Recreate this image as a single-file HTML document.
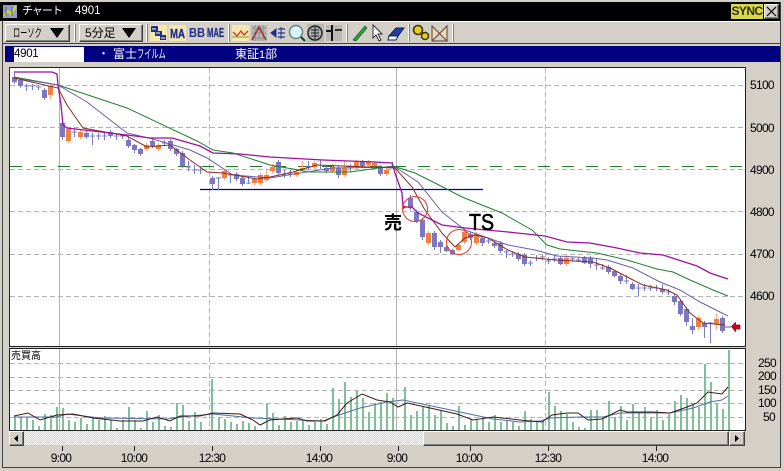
<!DOCTYPE html>
<html><head><meta charset="utf-8"><style>
html,body{margin:0;padding:0;width:784px;height:471px;overflow:hidden;background:#d4d0c8}
body{position:relative;font-family:"Liberation Sans","Noto Sans CJK JP",sans-serif;color:#000}
.a{position:absolute;white-space:nowrap}
.n{display:inline-block;transform:scaleX(.6);transform-origin:0 50%}
.btn{position:absolute;box-sizing:border-box;background:#d4d0c8;border:1px solid;border-color:#fff #404040 #404040 #fff;box-shadow:inset -1px -1px 0 #808080}
.tri{position:absolute;width:0;height:0;border-left:7px solid transparent;border-right:7px solid transparent;border-top:10px solid #000}
.sep{position:absolute;top:24px;height:18px;width:1px;background:#fff;border-right:1px solid #808080}
</style></head><body>
<div class="a" style="left:0;top:0;width:784px;height:2px;background:#d4d0c8"></div>
<div class="a" style="left:0;top:2px;width:781px;height:19px;background:#000"></div>
<div class="a" style="left:2px;top:21px;width:778px;height:1px;background:#fff"></div>
<div class="a" style="left:780px;top:2px;width:1px;height:466px;background:#404040"></div>
<div class="a" style="left:2px;top:21px;width:1px;height:447px;background:#404040"></div>
<div class="a" style="left:2px;top:467px;width:779px;height:1px;background:#404040"></div>
<svg class="a" style="left:3px;top:4px" width="15" height="15" viewBox="0 0 15 15"><rect x="0" y="1" width="14" height="13" fill="#9a9ac8"/><path d="M1 12L5 7L8 10L13 2" fill="none" stroke="#d0e020" stroke-width="2"/><path d="M3 3V12M9 3V12" stroke="#506090"/></svg>
<div class="a" style="left:22px;top:3px;font-size:11px;line-height:16px;color:#fff;letter-spacing:-1px">チャート</div>
<div class="a" style="left:75px;top:3px;font-size:11.5px;line-height:16px;color:#fff">4901</div>
<div class="a" style="left:731px;top:4px;width:32px;height:15px;background:#d8d850;font-size:12px;font-weight:bold;line-height:15px;text-align:center;color:#303000;letter-spacing:-.6px">SYNC</div>
<div class="btn" style="left:764px;top:4px;width:15px;height:15px"></div>
<svg class="a" style="left:764px;top:4px" width="15" height="15"><path d="M3 3L12 12M12 3L3 12" stroke="#000" stroke-width="1.2"/></svg>

<div class="btn" style="left:5px;top:24px;width:65px;height:18px"></div>
<div class="a" style="left:13px;top:25px;font-size:12px;line-height:16px"><span class="n">ローソク</span></div>
<div class="tri" style="left:50px;top:28px"></div>
<div class="sep" style="left:74px"></div>
<div class="btn" style="left:79px;top:24px;width:64px;height:18px"></div>
<div class="a" style="left:85px;top:25px;font-size:12px;line-height:16px">5分足</div>
<div class="tri" style="left:122px;top:28px"></div>
<div class="sep" style="left:146px"></div><div class="sep" style="left:228px"></div><div class="sep" style="left:346px"></div><div class="sep" style="left:408px"></div><div class="sep" style="left:452px"></div>

<svg class="a" style="left:148px;top:22px" width="310" height="22" viewBox="148 22 310 22">
<rect x="150" y="25" width="17" height="16" fill="#f4e8b0"/>
<rect x="151" y="26" width="7" height="6" fill="#20308a"/><rect x="155" y="31" width="7" height="5" fill="#20308a"/><rect x="160" y="35" width="6" height="5" fill="#20308a"/>
<path d="M152 29h4M156 33h4M161 38h4" stroke="#fff"/>
<rect x="169" y="25" width="17" height="16" fill="#f4e8b0"/>
<text x="170" y="38" font-size="13" font-weight="bold" fill="#20308a" stroke="#20308a" stroke-width=".4" textLength="15" lengthAdjust="spacingAndGlyphs" font-family="Liberation Sans">MA</text>
<text x="189" y="37" font-size="13" font-weight="bold" fill="#20308a" textLength="16" lengthAdjust="spacingAndGlyphs" font-family="Liberation Sans">BB</text>
<text x="207" y="37" font-size="13" font-weight="bold" fill="#20308a" stroke="#20308a" stroke-width=".3" textLength="17" lengthAdjust="spacingAndGlyphs" font-family="Liberation Sans">MAE</text>
<rect x="232" y="25" width="17" height="16" fill="#f4e8b0"/>
<path d="M233 32L237 36L241 31L244 35L248 31" fill="none" stroke="#d03020" stroke-width="1.3"/><path d="M232 37H249" stroke="#70a040"/>
<rect x="251" y="25" width="16" height="16" fill="#b8b8b4"/>
<path d="M252 28h14M252 33h14M252 38h14M255 25v16M259 25v16M263 25v16" stroke="#909090"/><path d="M252 40L259 27L266 40" fill="none" stroke="#a03030" stroke-width="1.5"/>
<path d="M271 33L276 29V37ZM281 27V39" fill="#20308a" stroke="#20308a"/><path d="M278 29h7M278 33h7M278 37h7" stroke="#20308a" stroke-width="1.3"/>
<circle cx="296" cy="32" r="6.5" fill="#d8f4f4" stroke="#608888" stroke-width="1.5"/><path d="M301 37L305 41" stroke="#104040" stroke-width="2.2"/>
<rect x="307" y="24" width="17" height="18" fill="#b8b8b4"/>
<circle cx="315" cy="33" r="7" fill="#b0b0b0" stroke="#202020" stroke-width="1.4"/><path d="M311 30h8M311 33h8M311 36h8M315 27v12" stroke="#202020"/>
<rect x="326" y="25" width="16" height="16" fill="#b8b8b4"/>
<path d="M332 25V41M326 31h6" stroke="#101010" stroke-width="2"/><path d="M335 30h7" stroke="#303030" stroke-width="2"/>
<path d="M353 40L365 26L367 28L356 41Z" fill="#30a040" stroke="#106020" stroke-width=".7"/>
<path d="M373 25V38L376 35L379 41L381 40L378 34H382Z" fill="#fff" stroke="#303030"/>
<path d="M389 36L396 28H404L398 36Z" fill="#2040a0" stroke="#102060"/><path d="M389 36H398L396 40H388Z" fill="#fff" stroke="#102060"/>
<circle cx="418" cy="30" r="4.5" fill="#e0d020" stroke="#403000" stroke-width="1.6"/><circle cx="425" cy="36" r="3.5" fill="#e0d020" stroke="#403000" stroke-width="1.5"/>
<path d="M432 26V41H447ZM432 41L447 26V41" fill="#e8dcb0" stroke="#604040" stroke-width="1"/>
</svg>

<div class="a" style="left:3px;top:43px;width:777px;height:1px;background:#404040"></div>
<div class="a" style="left:5px;top:46px;width:775px;height:16px;background:#000080"></div>
<div class="a" style="left:14px;top:47px;width:70px;height:15px;background:#fff;font-size:11.5px;line-height:15px;letter-spacing:-.3px">4901</div>
<div class="a" style="left:98px;top:46px;font-size:11px;line-height:16px;color:#fff">・</div>
<div class="a" style="left:113px;top:46px;font-size:12px;line-height:16px;color:#fff">富士<span class="n">フイルム</span></div>
<div class="a" style="left:235px;top:46px;font-size:12px;line-height:16px;color:#fff">東証<span style="font-size:11px">1</span>部</div>

<svg class="a" style="left:0;top:0" width="784" height="471" viewBox="0 0 784 471" font-family="Liberation Sans,Noto Sans CJK JP,sans-serif">
<rect x="9.5" y="67.5" width="736" height="279" fill="#fff" stroke="#202020"/>
<rect x="9.5" y="348.5" width="736" height="82" fill="#fff" stroke="#202020"/>
<path d="M10 85.5H745M10 127.5H745M10 169.5H745M10 211.5H745M10 254.5H745M10 296.5H745M10 363.5H745M10 377.5H745M10 390.5H745M10 403.5H745M10 417.5H745" stroke="#b4b4b4" stroke-dasharray="5 3"/>
<path d="M209.5 68V346M209.5 349V430M545.5 68V346M545.5 349V430" stroke="#b4b4b4" stroke-dasharray="5 3"/>
<path d="M59.5 68V346M59.5 349V430M396.5 68V346M396.5 349V430" stroke="#b0b0b0"/>
<path d="M10 166.5H745" stroke="#207820" stroke-width="1" stroke-dasharray="12 12"/>
<path d="M200 189.5H483" stroke="#0000a8" stroke-width="1.2"/>

<path fill="none" stroke="#7c7cbc" d="M14.5 73V84M20.5 78V88M26.5 84V91M24 86H29M32.5 84V90M30 86H35M38.5 85V90M36 87H41M44.5 88V100M62.5 120V140M74.5 129V137M72 132H77M86.5 131V139M92.5 133V145M90 136H95M98.5 133V140M96 136H101M104.5 133V140M102 136H107M110.5 130V138M116.5 134V140M114 136H119M122.5 134V139M120 136H125M128.5 137V148M134.5 144V153M140.5 148V156M152.5 139V148M164.5 140V146M162 143H167M170.5 139V151M176.5 148V156M182.5 151V168M188.5 161V171M186 167H191M194.5 165V174M192 170H197M200.5 166V174M198 170H203M212.5 176V190M218.5 177V190M216 178H221M230.5 173V183M228 175H233M236.5 172V181M242.5 176V186M248.5 176V184M246 183H251M278.5 160V175M284.5 170V178M282 175H287M290.5 170V177M288 174H293M308.5 161V170M306 167H311M320.5 160V169M326.5 165V173M338.5 166V178M350.5 164V172M348 168H353M362.5 160V168M380.5 165V176M392.5 162V168M410.5 195V210M416.5 210V223M422.5 218V240M434.5 231V250M440.5 240V253M446.5 245V252M452.5 249V255M470.5 232V240M482.5 236V246M488.5 238V244M486 241H491M494.5 241V248M500.5 241V253M506.5 250V258M504 252H509M512.5 251V257M510 254H515M518.5 252V261M524.5 253V266M530.5 260V266M528 263H533M536.5 255V261M534 258H539M542.5 255V260M540 257H545M548.5 257V264M546 261H551M554.5 255V262M552 259H557M560.5 256V265M572.5 257V262M570 259H575M578.5 257V262M576 260H581M584.5 256V264M590.5 256V268M596.5 259V270M594 265H599M602.5 264V270M600 268H605M608.5 265V274M614.5 270V277M620.5 274V284M626.5 275V284M624 281H629M632.5 282V290M638.5 284V296M636 288H641M644.5 284V291M642 288H647M650.5 285V291M648 288H653M656.5 285V291M654 288H659M662.5 284V294M668.5 289V295M666 292H671M674.5 294V305M680.5 299V316M686.5 307V326M692.5 318V334M704.5 321V338M710.5 322V343M708 323H713M722.5 316V333"/>
<path fill="none" stroke="#f4a878" d="M50.5 84V99M68.5 127V143M80.5 129V139M146.5 143V151M158.5 143V151M224.5 169V180M254.5 177V185M260.5 173V185M266.5 170V182M272.5 164V173M296.5 169V177M302.5 161V172M314.5 161V169M332.5 164V173M344.5 161V177M356.5 160V169M368.5 160V167M374.5 161V168M386.5 168V176M428.5 231V245M458.5 243V252M464.5 228V244M476.5 232V245M566.5 254V266M698.5 316V330M716.5 313V330"/>
<path fill="none" stroke="#7c78c0" stroke-width="5" d="M14.5 77V82M20.5 80V86M44.5 90V98M62.5 123V137M86.5 133V137M110.5 132V136M128.5 140V146M134.5 145V150M140.5 149V154M152.5 141V146M170.5 141V149M176.5 149V154M182.5 153V166M212.5 178V184M236.5 174V179M242.5 178V184M278.5 162V173M326.5 168V171M338.5 168V175M362.5 162V166M380.5 167V174M410.5 198V208M416.5 212V221M422.5 220V237M434.5 233V247M440.5 242V247M446.5 247V251M452.5 250V254M470.5 234V238M482.5 238V243M494.5 243V246M500.5 243V251M518.5 254V259M524.5 255V264M560.5 258V264M584.5 258V263M590.5 258V264M608.5 267V272M614.5 271V276M620.5 276V281M632.5 284V289M662.5 289V292M674.5 296V302M680.5 301V314M686.5 309V322M692.5 326V330M704.5 323V327M722.5 318V331"/>
<path fill="none" stroke="#f08040" stroke-width="5" d="M50.5 86V95M68.5 129V141M80.5 132V137M146.5 145V149M158.5 145V149M224.5 171V178M254.5 179V183M260.5 175V183M266.5 175V180M272.5 167V171M296.5 172V175M302.5 168V170M314.5 163V167M332.5 167V171M344.5 168V175M356.5 162V167M368.5 162V165M374.5 163V166M386.5 170V174M428.5 233V243M458.5 245V250M464.5 232V242M476.5 234V243M566.5 258V264M698.5 318V327M716.5 319V324"/>

<polyline fill="none" stroke="#208030" points="14,77 58,85 127,108 197,141 213,150 233,153 270,165 310,172 350,172 393,166 415,173 435,183 462,197 502,213 532,230 547,245 560,249 597,253 627,260 657,269 673,272 690,280 713,290 728,296"/>
<polyline fill="none" stroke="#6a60a8" points="14,78 58,85 87,102 127,133 153,139 190,150 207,158 233,175 270,178 300,173 333,168 395,167 418,182 442,212 465,230 488,238 508,245 535,250 557,256 593,258 607,260 633,268 660,282 680,290 700,302 728,316"/>
<polyline fill="none" stroke="#8a2a20" points="14,78 58,88 67,105 83,128 127,136 147,147 170,145 190,160 207,172 223,173 257,179 270,177 293,172 317,165 395,168 412,187 425,210 442,233 455,247 465,238 475,235 488,238 508,250 525,257 555,260 593,262 610,268 633,280 643,285 667,290 677,295 690,313 703,323 725,325"/>
<polyline fill="none" stroke="#a010a0" stroke-width="1.3" points="14,72 52,72 57,74 58,85 61,105 63,125 67,128 127,135 150,138 172,138 200,146 213,153 240,154 270,157 323,160 375,162 392,163 395,173 402,193 403,207 412,207 418,213 428,218 442,225 465,228 508,232 545,236 567,242 590,243 617,248 640,253 663,255 697,266 710,273 728,279"/>

<circle cx="415" cy="209" r="12.5" fill="none" stroke="#e83828"/>
<circle cx="459" cy="242" r="12.5" fill="none" stroke="#e83828"/>
<path d="M403 205L407 207L403 209Z" fill="#d02020"/>
<text x="384" y="229" font-size="18" font-weight="bold" fill="#000">売</text>
<text x="469" y="230" font-size="23" fill="#000" stroke="#000" stroke-width=".6" textLength="25" lengthAdjust="spacingAndGlyphs">TS</text>
<path d="M731.5 326.5L735.5 322.5V325H740V329H735.5V331.5Z" fill="#d80020" stroke="#800010" stroke-width=".7"/>
<path d="M725 327H731" stroke="#606090"/>

<path fill="none" stroke="#7fbf9a" stroke-width="2" d="M15 417V430M21 417V430M27 417V430M33 420V430M39 426V430M45 414V430M51 415V430M57 407V430M63 408V430M69 420V430M75 422V430M81 418V430M87 424V430M93 418V430M99 420V430M105 416V430M111 420V430M117 428V430M123 420V430M129 407V430M135 420V430M141 428V430M147 411V430M153 422V430M159 415V430M165 426V430M171 427V430M177 403V430M183 405V430M189 421V430M195 412V430M201 422V430M212 379V430M219 417V430M225 419V430M231 422V430M237 424V430M243 421V430M249 423V430M255 426V430M267 404V430M273 413V430M279 425V430M285 416V430M291 422V430M297 421V430M303 420V430M309 425V430M315 422V430M321 419V430M327 424V430M333 388V430M339 399V430M345 382V430M351 397V430M357 391V430M363 398V430M369 412V430M375 403V430M381 402V430M387 393V430M393 398V430M405 387V430M411 415V430M417 411V430M423 407V430M429 405V430M435 415V430M441 410V430M447 423V430M453 426V430M459 406V430M465 425V430M471 419V430M477 420V430M483 417V430M489 422V430M495 415V430M501 422V430M507 420V430M513 422V430M519 426V430M525 411V430M531 419V430M537 421V430M543 421V430M549 392V430M555 406V430M561 411V430M567 414V430M573 422V430M579 427V430M585 428V430M591 410V430M597 410V430M603 417V430M609 401V430M615 417V430M621 406V430M627 420V430M633 404V430M639 412V430M645 407V430M651 418V430M657 410V430M663 420V430M669 414V430M675 401V430M681 395V430M687 398V430M693 403V430M699 407V430M705 364V430M711 382V430M717 403V430M723 409V430M729 350V430"/>
<polyline fill="none" stroke="#5070a0" points="14,417 57,417 67,414 100,418 167,419 180,417 213,414 253,418 323,421 333,417 360,408 387,402 403,400 427,405 460,412 493,419 520,422 540,421 550,418 580,417 603,417 620,413 670,413 693,408 710,402 722,400 728,396"/>
<polyline fill="none" stroke="#401818" points="14,416 28,413 40,420 57,415 73,414 93,418 120,421 143,421 157,417 170,421 180,416 200,416 213,413 240,414 253,420 260,425 270,420 283,419 297,418 307,421 325,421 337,415 347,403 362,394 377,400 390,402 398,407 407,403 430,408 457,414 473,420 493,417 520,420 530,421 542,422 552,415 567,413 578,413 588,420 602,419 620,410 627,412 653,412 670,413 687,407 697,403 708,392 722,394 728,387"/>

<g font-size="12" fill="#000" letter-spacing="-.7" text-anchor="start">
<text x="750" y="89">5100</text><text x="750" y="132">5000</text><text x="750" y="174">4900</text><text x="750" y="216">4800</text><text x="750" y="258">4700</text><text x="750" y="300">4600</text>
<text x="758" y="367">250</text><text x="758" y="380">200</text><text x="758" y="394">150</text><text x="758" y="407">100</text><text x="763" y="421">50</text>
</g>
<text x="11" y="359" font-size="10">売買高</text>
<g font-size="12" fill="#000" letter-spacing="-.7" text-anchor="middle">
<text x="61" y="462">9:00</text><text x="134" y="462">10:00</text><text x="212" y="462">12:30</text><text x="319" y="462">14:00</text><text x="397" y="462">9:00</text><text x="469" y="462">10:00</text><text x="548" y="462">12:30</text><text x="655" y="462">14:00</text>
</g>
<path d="M62.5 446V451M134.5 446V451M212.5 446V451M320.5 446V451M398.5 446V451M470.5 446V451M548.5 446V451M656.5 446V451" stroke="#202020"/>
</svg>

<div class="a" style="left:24px;top:431px;width:399px;height:14px;background:repeating-conic-gradient(#fff 0 25%,#d4d0c8 0 50%) 0 0/2px 2px"></div>
<div class="btn" style="left:9px;top:431px;width:15px;height:15px"></div>
<svg class="a" style="left:9px;top:431px" width="15" height="15"><path d="M5 7.5L9 4V11Z" fill="#000"/></svg>
<div class="btn" style="left:423px;top:431px;width:306px;height:15px"></div>
<div class="btn" style="left:729px;top:431px;width:16px;height:15px"></div>
<svg class="a" style="left:729px;top:431px" width="16" height="15"><path d="M10 7.5L6 4V11Z" fill="#000"/></svg>
</body></html>
